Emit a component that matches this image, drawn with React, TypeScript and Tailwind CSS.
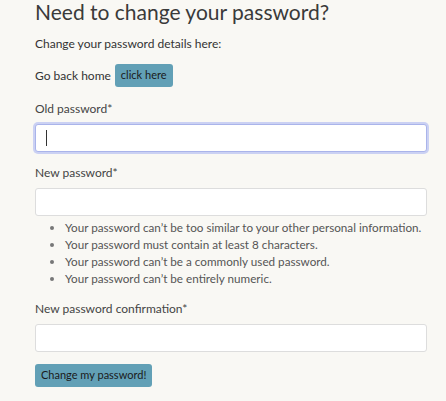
import React from 'react'

const hints = [
  "Your password can’t be too similar to your other personal information.",
  'Your password must contain at least 8 characters.',
  "Your password can’t be a commonly used password.",
  "Your password can’t be entirely numeric.",
]

const Field = ({ label, focused }: { label: string; focused?: boolean }) => (
  <>
    <label className="block h-[18px] leading-[18px] text-[12px] text-[#444]">{label}</label>
    <div
      className={
        focused
          ? 'mt-[6px] h-[28px] w-[392px] rounded-[3px] border border-[#aab4ea] bg-white shadow-[0_0_0_2px_#cbd1f3] flex items-center pl-[10px]'
          : 'mt-[6px] h-[28px] w-[392px] rounded-[3px] border border-[#dddddd] bg-white'
      }
    >
      {focused && <span className="block h-[16px] w-px bg-[#333]" />}
    </div>
  </>
)

export default function App() {
  return (
    <div className="min-h-[401px] w-[446px] overflow-hidden bg-[#f9f8f4] pl-[35px] font-['Lato',sans-serif] text-[#333]">
      <h1 className="h-[24px] text-[21px] leading-[24px] text-[#3a3a3a]">Need to change your password?</h1>

      <p className="mt-[11px] h-[18px] text-[12px] leading-[18px]">Change your password details here:</p>

      <div className="mt-[11px] flex h-[23px] items-center gap-[4px] text-[12px]">
        <span>Go back home</span>
        <button className="h-[23px] rounded-[3px] bg-[#62a0b6] px-[6px] text-[11px] text-[#1a1a1a]">click here</button>
      </div>

      <div className="mt-[13px]">
        <Field label="Old password*" focused />
      </div>

      <div className="mt-[12px]">
        <Field label="New password*" />
      </div>

      <ul className="mt-[3px] list-disc pl-[30px] text-[11.7px] leading-[17px] text-[#555] marker:text-[#777]">
        {hints.map((h) => (
          <li key={h}>{h}</li>
        ))}
      </ul>

      <div className="mt-[13px]">
        <Field label="New password confirmation*" />
      </div>

      <button className="mt-[12px] h-[23px] rounded-[3px] bg-[#62a0b6] px-[6px] text-[11px] text-[#1a1a1a]">
        Change my password!
      </button>
    </div>
  )
}
